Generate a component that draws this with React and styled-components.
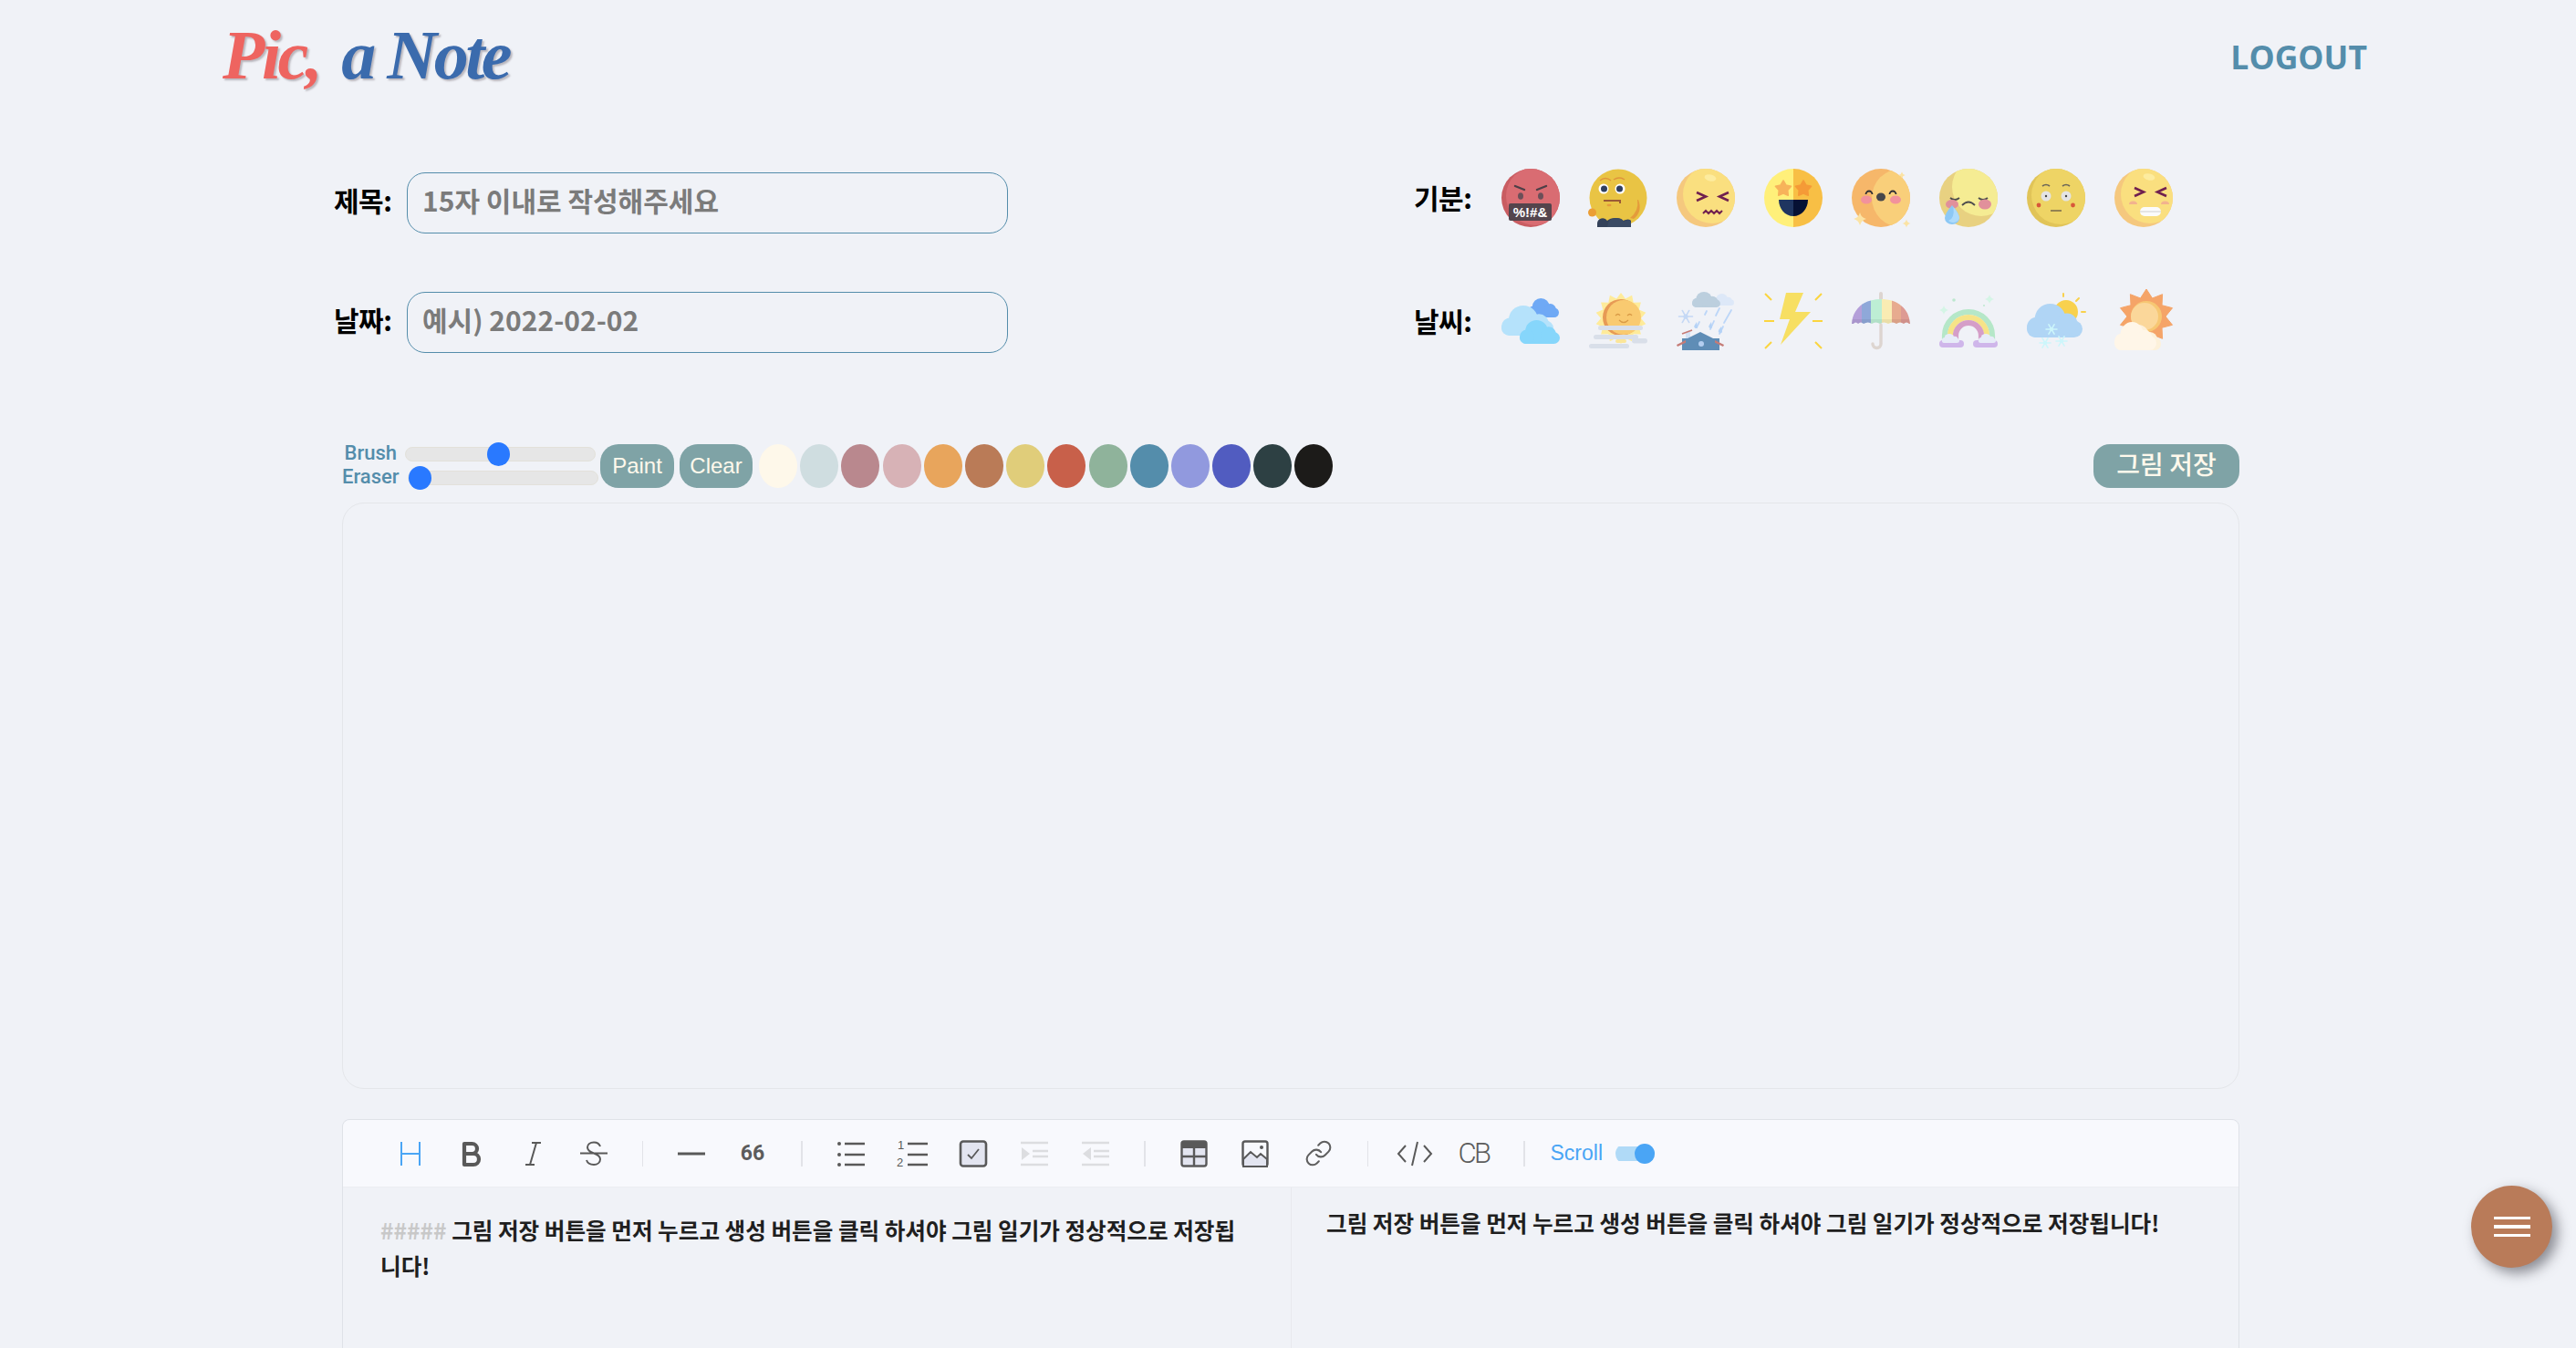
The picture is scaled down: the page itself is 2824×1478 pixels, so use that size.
import React from "react";
import styled, { createGlobalStyle } from "styled-components";
import { Link as LinkIcon } from "lucide-react";

const KR = `"Noto Sans CJK KR", "Noto Sans", sans-serif`;

const Global = createGlobalStyle`
  html, body { margin: 0; padding: 0; height: 1478px; overflow: hidden; background: #f0f2f7; }
  * { box-sizing: border-box; }
`;

const Page = styled.div`
  width: 2824px;
  height: 1478px;
  overflow: hidden;
  background: #f0f2f7;
  font-family: ${KR};
`;

const Header = styled.header`
  height: 128px;
  padding: 0 229px 0 244px;
  display: flex;
  align-items: center;
  justify-content: space-between;
`;

const Logo = styled.div`
  display: flex;
  gap: 24px;
  font-family: "Liberation Serif", serif;
  font-style: italic;
  font-weight: 700;
  font-size: 76px;
  line-height: 1;
  margin-top: -8px;
  letter-spacing: -3.5px;
  text-shadow: 2px 2px 2px rgba(120, 110, 120, 0.45);
`;

const LogoWord = styled.span`
  color: ${(p) => p.$color};
`;

const LogoutLink = styled.a`
  font-family: "Open Sans", sans-serif;
  font-weight: 700;
  font-size: 35.5px;
  line-height: 1;
  margin-top: -3px;
  color: #548dab;
`;

const TopSection = styled.section`
  margin-top: 57px;
  padding-left: 366px;
  display: flex;
`;

const FormColumn = styled.div`
  width: 1184px;
  padding-top: 4px;
  display: flex;
  flex-direction: column;
  gap: 64px;
`;

const FieldRow = styled.label`
  display: flex;
  align-items: center;
  gap: 17px;
`;

const FieldLabel = styled.span`
  width: 63px;
  font-size: 30px;
  font-weight: 700;
  line-height: 1;
  white-space: nowrap;
  color: #000;
  letter-spacing: -0.5px;
  margin-top: -8px;
`;

const TextInput = styled.input`
  width: 659px;
  height: 67px;
  padding: 0 16px 8px;
  border: 1.5px solid #548dab;
  border-radius: 20px;
  background: transparent;
  font-family: ${KR};
  font-size: 30px;
  font-weight: 700;
  outline: none;
  &::placeholder { color: #7b7b7b; opacity: 1; }
`;

const PickerColumn = styled.div`
  display: flex;
  flex-direction: column;
  gap: 71px;
`;

const PickerRow = styled.div`
  display: flex;
  align-items: center;
  height: 64px;
`;

const PickerLabel = styled(FieldLabel)`
  width: 96px;
  margin-top: -3px;
`;

const PickerIcons = styled.div`
  display: flex;
  gap: 32px;
`;

const Picture = styled.svg`
  width: 64px;
  height: 64px;
  display: block;
  overflow: visible;
`;

const DrawSection = styled.section`
  margin-top: 98px;
  padding: 0 369px 0 375px;
`;

const Tools = styled.div`
  height: 52px;
  display: flex;
  align-items: center;
`;

const SliderGroup = styled.div`
  width: 283px;
  display: flex;
  flex-direction: column;
`;

const SliderRow = styled.div`
  height: 26px;
  display: flex;
  align-items: center;
  gap: ${(p) => p.$gap}px;
`;

const SliderLabel = styled.span`
  width: ${(p) => p.$width}px;
  text-align: right;
  font-family: "Roboto", sans-serif;
  font-weight: 500;
  font-size: 22px;
  line-height: 1;
  margin-top: -3px;
  color: #548dab;
`;

const Range = styled.input`
  appearance: none;
  width: 209px;
  height: 26px;
  margin: 0;
  background: transparent;
  &::-webkit-slider-runnable-track {
    height: 16px;
    border-radius: 8px;
    background: #e6e6e6;
    border: 1px solid #e3e1da;
  }
  &::-webkit-slider-thumb {
    appearance: none;
    width: 25px;
    height: 26px;
    margin-top: -6px;
    border-radius: 50%;
    background: #2979ff;
  }
`;

const PaintButton = styled.button`
  width: ${(p) => p.$width}px;
  height: 48px;
  margin-right: 6px;
  padding: 0;
  border: none;
  border-radius: 20px;
  background: #7fa3a6;
  color: #fff9ec;
  font-family: "Liberation Sans", sans-serif;
  font-size: 24px;
`;

const Swatches = styled.div`
  margin-left: 1px;
  display: flex;
  gap: 3.2px;
`;

const Swatch = styled.span`
  display: block;
  width: 42px;
  height: 48px;
  border-radius: 50%;
  background: ${(p) => p.$color};
`;

const SaveButton = styled.button`
  margin-left: auto;
  width: 160px;
  height: 48px;
  padding: 0 0 6px;
  border: none;
  border-radius: 18px;
  background: #7fa3a6;
  color: #fff9ec;
  font-family: ${KR};
  font-size: 28px;
  font-weight: 500;
`;

const Canvas = styled.div`
  margin-top: 14px;
  height: 643px;
  border: 1.5px solid #e4e6ea;
  border-radius: 24px;
`;

const Editor = styled.div`
  margin-top: 33px;
  height: 400px;
  border: 1.5px solid #dfe2e8;
  border-radius: 8px 8px 0 0;
`;

const EditorBar = styled.div`
  height: 74px;
  padding-left: 40px;
  display: flex;
  align-items: center;
  background: #f8f9fd;
  border-bottom: 1.5px solid #ecedf2;
  border-radius: 8px 8px 0 0;
`;

const ToolButton = styled.span`
  flex: none;
  width: ${(p) => p.$width || 67}px;
  height: 32px;
  display: flex;
  align-items: center;
  justify-content: center;
`;

const ToolIcon = styled.svg`
  width: ${(p) => p.$w || 32}px;
  height: 32px;
  display: block;
  overflow: visible;
  fill: none;
  stroke: ${(p) => p.$stroke || "#595959"};
  stroke-width: 2.4;
`;

const Divider = styled.span`
  flex: none;
  width: 1.5px;
  height: 28px;
  margin: 0 ${(p) => p.$space}px;
  background: #e2e3e8;
`;

const GlyphTool = styled.span`
  font-family: "Roboto", sans-serif;
  font-size: ${(p) => p.$size}px;
  font-weight: ${(p) => p.$weight};
  letter-spacing: ${(p) => p.$spacing}px;
  color: #5c5c5c;
  line-height: 1;
`;

const ScrollLabel = styled.span`
  margin-left: 6px;
  font-family: "Liberation Sans", sans-serif;
  font-size: 23px;
  color: #4aa5f5;
`;

const ScrollSwitch = styled.span`
  margin-left: 14px;
  width: 43px;
  height: 22px;
  display: flex;
  align-items: center;
  justify-content: flex-end;
  background: linear-gradient(#0000 3px, #b0daf7 3px, #b0daf7 19px, #0000 19px);
  border-radius: 11px;
`;

const ScrollKnob = styled.span`
  width: 22px;
  height: 22px;
  border-radius: 50%;
  background: #4aa5f5;
`;

const Panes = styled.div`
  display: flex;
  height: 330px;
`;

const SourcePane = styled.div`
  width: 1040px;
  padding: 27px 40px 0 41px;
  border-right: 1.5px solid #e8e9ee;
  font-size: 24.6px;
  font-weight: 600;
  line-height: 38.5px;
  color: #1f1f1f;
  word-break: break-all;
`;

const HashMark = styled.span`
  color: #c8c8c8;
`;

const PreviewPane = styled.div`
  flex: 1;
  padding: 18.5px 0 0 38px;
  font-size: 24.6px;
  font-weight: 600;
  line-height: 39px;
  color: #1f1f1f;
  white-space: nowrap;
`;

const Fab = styled.button`
  position: fixed;
  left: 2709px;
  top: 1300px;
  width: 89px;
  height: 90px;
  padding: 0;
  border: none;
  border-radius: 50%;
  background: #b97b59;
  box-shadow: 6px 6px 14px rgba(40, 40, 50, 0.5);
  display: flex;
  flex-direction: column;
  align-items: center;
  justify-content: center;
  gap: 6px;
`;

const FabLine = styled.span`
  width: 40px;
  height: 3.5px;
  background: #fff;
`;

/* ---------- drawing helpers ---------- */

const Cloud = ({ x, y, w, h, fill }) => (
  <g transform={`translate(${x} ${y}) scale(${w / 100} ${h / 60})`} fill={fill}>
    <rect x="0" y="30" width="100" height="30" rx="15" />
    <circle cx="42" cy="28" r="28" />
    <circle cx="72" cy="36" r="19" />
    <circle cx="18" cy="42" r="18" />
  </g>
);

const spikes = (cx, cy, outer, inner, n) =>
  Array.from({ length: n * 2 }, (_, i) => {
    const r = i % 2 ? inner : outer;
    const a = (Math.PI * i) / n - Math.PI / 2;
    return `${(cx + r * Math.cos(a)).toFixed(1)},${(cy + r * Math.sin(a)).toFixed(1)}`;
  }).join(" ");

const Sparkle = ({ x, y, r, fill }) => (
  <path
    fill={fill}
    d={`M${x} ${y - r}Q${x + r * 0.2} ${y - r * 0.2} ${x + r} ${y}Q${x + r * 0.2} ${y + r * 0.2} ${x} ${y + r}Q${x - r * 0.2} ${y + r * 0.2} ${x - r} ${y}Q${x - r * 0.2} ${y - r * 0.2} ${x} ${y - r}z`}
  />
);

const Flake = ({ x, y, r, stroke }) => (
  <g stroke={stroke} strokeWidth="1.6" strokeLinecap="round">
    <path d={`M${x - r} ${y}H${x + r}M${x - r * 0.5} ${y - r * 0.87}L${x + r * 0.5} ${y + r * 0.87}M${x + r * 0.5} ${y - r * 0.87}L${x - r * 0.5} ${y + r * 0.87}`} />
    <circle cx={x} cy={y} r={r * 0.35} fill={stroke} stroke="none" />
  </g>
);

const Disc = ({ id, base, light, cx, cy, r = 32 }) => (
  <>
    <clipPath id={id}>
      <circle cx="32" cy="32" r="32" />
    </clipPath>
    <circle cx="32" cy="32" r="32" fill={base} />
    <circle cx={cx} cy={cy} r={r} fill={light} clipPath={`url(#${id})`} />
  </>
);

const Squint = () => (
  <g fill="none" stroke="#70204f" strokeWidth="2.6">
    <path d="M22 26l10 4.500-10 4.500M57 26l-10 4.500 10 4.500" />
  </g>
);

const moods = [
  <>
    <Disc id="m1" base="#c95d62" light="#d96c72" cx={37} cy={30} />
    <path d="M15 19l10 4M49 19l-10 4" stroke="#4d3f47" strokeWidth="2.400" strokeLinecap="round" />
    <ellipse cx="21" cy="30" rx="3" ry="3.800" fill="#6b4f58" />
    <ellipse cx="43" cy="30" rx="3" ry="3.800" fill="#6b4f58" />
    <rect x="8" y="38" width="47" height="19" rx="2" fill="#54444c" />
    <text x="31.500" y="53" textAnchor="middle" fontFamily="Liberation Sans" fontWeight="700" fontSize="15" fill="#fff">%!#&amp;</text>
  </>,
  <>
    <circle cx="32" cy="32" r="31.500" fill="#e9c444" />
    <path d="M12 13q6-5 12 0M27 12q6-4 12 0" fill="none" stroke="#e0943c" strokeWidth="1.500" />
    <circle cx="16" cy="22" r="5.500" fill="#fff" />
    <circle cx="34" cy="22" r="5.500" fill="#fff" />
    <circle cx="16.500" cy="22" r="3.500" fill="#2f3f5f" />
    <circle cx="33.500" cy="22" r="3.500" fill="#2f3f5f" />
    <path d="M16 35h18v3" fill="none" stroke="#9b5a35" strokeWidth="2" />
    <ellipse cx="22" cy="40" rx="2.500" ry="1.200" fill="#e49b3b" />
    <circle cx="3.500" cy="48" r="4.500" fill="#eb9e35" />
    <path d="M53 34q2 12-8 20l4 1q10-8 5-21z" fill="#e49b3b" />
    <path d="M9 64v-4a6 6 0 0 1 11-3q3-3 9-3t8 3q7-3 9 0v7z" fill="#34425a" />
    <path d="M20 64q1-10 9-10t9 4q7-4 8 0v6z" fill="#3a4a63" />
  </>,
  <>
    <Disc id="m3" base="#f5c87e" light="#fadf7f" cx={39} cy={28} />
    <ellipse cx="37" cy="10" rx="6.500" ry="3.500" fill="#fdec9f" transform="rotate(12 37 10)" />
    <Squint />
    <path d="M29 49l3-3 3 3 3-3 3 3 3-3 3 3 3-3" fill="none" stroke="#70204f" strokeWidth="2" />
  </>,
  <>
    <clipPath id="m4"><circle cx="32" cy="32" r="32" /></clipPath>
    <g clipPath="url(#m4)">
      <rect width="32" height="64" fill="#fff07a" />
      <rect x="32" width="32" height="64" fill="#f8bf45" />
    </g>
    <polygon points={spikes(21, 22, 9, 5, 5)} fill="#f7b35a" strokeLinejoin="round" stroke="#f7b35a" strokeWidth="1.500" />
    <polygon points={spikes(43, 22, 9, 5, 5)} fill="#f59a37" strokeLinejoin="round" stroke="#f59a37" strokeWidth="1.500" />
    <path d="M16 34h16v18c-9 0-16-8-16-18z" fill="#1f3560" />
    <path d="M32 34h16c0 10-7 18-16 18z" fill="#061134" />
  </>,
  <>
    <Disc id="m5" base="#f6b76a" light="#f9cf7a" cx={54} cy={32} />
    <path d="M15.500 28a3.500 3.500 0 0 1 7 0M41.500 28a3.500 3.500 0 0 1 7 0" fill="none" stroke="#2e2e33" strokeWidth="1.800" />
    <ellipse cx="32" cy="31" rx="5" ry="4.500" fill="#47474b" />
    <ellipse cx="16" cy="34" rx="6" ry="4.500" fill="#f2929c" />
    <ellipse cx="48" cy="34" rx="6" ry="4.500" fill="#f2929c" />
    <Sparkle x={9} y={55} r={7} fill="#fbe3a4" />
    <Sparkle x={60} y={60} r={4.500} fill="#fbe3a4" />
    <Sparkle x={55} y={7} r={3.500} fill="#fbe3a4" />
  </>,
  <>
    <Disc id="m6" base="#e8d181" light="#f5ec93" cx={46} cy={20} />
    <path d="M12 32q5 4 10 0M43 32q5 4 10 0" fill="none" stroke="#4d4d4d" strokeWidth="1.800" />
    <path d="M25 40q7-7 14 0" fill="none" stroke="#4d4d4d" strokeWidth="1.800" />
    <ellipse cx="14" cy="39" rx="7" ry="5" fill="#e1909b" />
    <ellipse cx="50" cy="39" rx="7" ry="5.500" fill="#e1909b" />
    <path d="M14 40q8 9 8 14a8 7 0 0 1-16 0q0-5 8-14z" fill="#8cc8f5" />
    <path d="M15.500 42q6.500 8 6.500 12a7 6 0 0 1-12 3q7-2 5.500-15z" fill="#aedbfb" />
  </>,
  <>
    <Disc id="m7" base="#e1c458" light="#eed465" cx={37} cy={29} />
    <path d="M17 19q4-3 8 0M39 19q4-3 8 0" fill="none" stroke="#6b6658" strokeWidth="1.700" />
    <circle cx="21" cy="30" r="5.500" fill="#e4e4e4" />
    <circle cx="43" cy="30" r="5.500" fill="#e4e4e4" />
    <circle cx="21" cy="30" r="1.200" fill="#444" />
    <circle cx="43" cy="30" r="1.200" fill="#444" />
    <circle cx="13" cy="40" r="2.400" fill="#d8573a" />
    <circle cx="50.500" cy="40" r="2.400" fill="#d8573a" />
    <path d="M26 46h12" stroke="#8a7a50" strokeWidth="1.800" />
  </>,
  <>
    <Disc id="m8" base="#f5c87e" light="#fadf7f" cx={39} cy={28} />
    <ellipse cx="38" cy="9" rx="6.500" ry="3.500" fill="#fdec9f" transform="rotate(12 38 9)" />
    <g transform="translate(0 -5)"><Squint /></g>
    <path d="M16 39a4.500 3.500 0 0 1 9 0zM51 39a4.500 3.500 0 0 1 9 0z" fill="#f2b38e" />
    <rect x="28" y="42" width="23" height="10" rx="5" fill="#fbfbfb" />
    <path d="M28 47h23" stroke="#dedede" strokeWidth="1.500" />
  </>,
];

const weather = [
  <>
    <Cloud x={29} y={7} w={34} h={21} fill="#6fa9f5" />
    <Cloud x={0} y={15} w={57} h={33} fill="#b5e2fb" />
    <Cloud x={20} y={31} w={44} h={26} fill="#86d6fb" />
  </>,
  <>
    <polygon points={spikes(35, 29, 28, 22, 14)} fill="#feeb9a" />
    <circle cx="35" cy="28" r="20" fill="#e79a55" />
    <circle cx="38" cy="28" r="19" fill="#f9ca70" />
    <path d="M29 26q3-3 5 0M42 26q3-3 5 0M33 31q5 5 10 0" fill="none" stroke="#d99a45" strokeWidth="1.300" />
    <g fill="#d9dfe9">
      <rect x="10" y="37" width="49" height="5" rx="2.500" />
      <rect x="5" y="47" width="49" height="5" rx="2.500" />
      <rect x="47" y="51" width="17" height="5.500" rx="2.700" />
      <rect x="0" y="57" width="44" height="5" rx="2.500" />
    </g>
    <rect x="29" y="52" width="12" height="4" rx="2" fill="#fbe69a" />
  </>,
  <>
    <Cloud x={40} y={2} w={23} h={13} fill="#dde8f8" />
    <Cloud x={17} y={0} w={31} h={17} fill="#bccfde" />
    <Flake x={10} y={27} r={7.500} stroke="#c4d8f5" />
    <g fill="none" stroke="#bcd6f8" strokeWidth="1.800" strokeLinecap="round">
      <path d="M33 21l-2 4M47 18l-4 8M60 20l-8 14M25 33l-3 6M41 32l-4 9M51 38l-4 8" />
    </g>
    <path d="M22 33l-2.500 4a2 2 0 0 0 3.500 2z" fill="#b4d2f6" />
    <path d="M38 33l-2.500 4a2 2 0 0 0 3.500 2z" fill="#b4d2f6" />
    <path d="M49 38l-3 4a2.200 2.200 0 0 0 4 2z" fill="#b4d2f6" />
    <rect x="10" y="44" width="5" height="8" fill="#d3e2f5" />
    <path d="M6 46l11-4" stroke="#c57b76" strokeWidth="1.800" />
    <rect x="6" y="51" width="41" height="13" fill="#5f8db6" />
    <path d="M0 58l26-13 26 13-1 2-25-12L1 60z" fill="#c57b76" />
    <path d="M10 52l16-8 16 8v12H10z" fill="#5f8db6" />
    <circle cx="27" cy="57" r="3" fill="#b4cef0" />
  </>,
  <>
    <polygon points="24,1 43,1 34,22 51,22 18,58 28,30 17,30" fill="#f7df62" />
    <path d="M1 2l7 7M63 2l-7 7M0 32h11M53 32h11M1 62l7-7M63 62l-7-7" stroke="#fbd53f" strokeWidth="2" fill="none" />
  </>,
  <>
    <rect x="30" y="0" width="4" height="10" rx="2" fill="#ddd5d0" />
    <path d="M32 36v21a4.500 4.500 0 0 1-9 0" fill="none" stroke="#ddd5d0" strokeWidth="3.400" strokeLinecap="round" />
    <clipPath id="u1"><path d="M0 35C1 18 14 8 32 8s31 10 32 27l-1 0q-3-3-6 0-4-3-8 0-4-3-9 0-5-3-9 0-5-3-9 0-4-3-9 0-3-3-6 0-3-3-5 0z" /></clipPath>
    <g clipPath="url(#u1)">
      <rect x="0" y="0" width="12" height="40" fill="#b49fd9" />
      <rect x="11" y="0" width="10" height="40" fill="#8fa8d9" />
      <rect x="21" y="0" width="12" height="40" fill="#bdeed4" />
      <rect x="33" y="0" width="11" height="40" fill="#f9ecb3" />
      <rect x="44" y="0" width="10" height="40" fill="#e7ab8f" />
      <rect x="54" y="0" width="10" height="40" fill="#dd9a93" />
      <rect x="0" y="30" width="64" height="6" fill="#000" opacity="0.06" />
    </g>
  </>,
  <>
    <g fill="none" strokeWidth="6.200">
      <path d="M6 56V48a26 26 0 0 1 52 0v8" stroke="#b5e7c8" />
      <path d="M12 56V48a20 20 0 0 1 40 0v8" stroke="#f6e387" />
      <path d="M18 56V48a14 14 0 0 1 28 0v8" stroke="#d59ec8" />
    </g>
    <rect x="0" y="53" width="27" height="8" rx="4" fill="#cfb6ea" />
    <rect x="37" y="53" width="27" height="8" rx="4" fill="#cfb6ea" />
    <Cloud x={3} y={46} w={19} h={10} fill="#e7ecf8" />
    <Cloud x={43} y={46} w={19} h={10} fill="#e7ecf8" />
    <Sparkle x={5} y={20} r={5} fill="#d5f5e6" />
    <Sparkle x={55} y={8} r={5} fill="#d5f5e6" />
    <circle cx="16" cy="9" r="1.800" fill="#bce8cf" />
    <circle cx="49" cy="15" r="1" fill="#bce8cf" />
  </>,
  <>
    <circle cx="43" cy="22" r="13" fill="#f8d14d" />
    <path d="M40 2v3M57 7l-3 3M60 22h4" stroke="#f8d14d" strokeWidth="2" strokeLinecap="round" />
    <Cloud x={0} y={13} w={61} h={37} fill="#b0d5f5" />
    <Flake x={27} y={41} r={6} stroke="#cdf6fb" />
    <Flake x={20} y={56} r={6} stroke="#cdf6fb" />
    <Flake x={38} y={54} r={6} stroke="#cdf6fb" />
  </>,
  <>
    <polygon points={spikes(35, 27, 30, 21, 10)} fill="#f5a468" stroke="#f5a468" strokeLinejoin="round" />
    <circle cx="35" cy="27" r="17" fill="#f7c773" />
    <circle cx="33" cy="27" r="15" fill="#fbd79a" />
    <Cloud x={8} y={36} w={43} h={28} fill="#fdf1da" />
    <Cloud x={0} y={33} w={46} h={31} fill="#fff6e8" />
  </>,
];

const swatchColors = [
  "#fef8ea", "#cfdde0", "#b9888e", "#d7b2b6", "#e8a55c", "#ba7b57", "#e0cd7a",
  "#c8604a", "#8fb39b", "#548dab", "#9199de", "#515cc0", "#2d4043", "#1c1b19",
];

const hint = "그림 저장 버튼을 먼저 누르고 생성 버튼을 클릭 하셔야 그림 일기가 정상적으로 저장됩니다!";

export default function App() {
  return (
    <Page>
      <Global />
      <Header>
        <Logo>
          <LogoWord $color="#ee6460">Pic,</LogoWord>
          <LogoWord $color="#3b6bad">a Note</LogoWord>
        </Logo>
        <LogoutLink>LOGOUT</LogoutLink>
      </Header>

      <TopSection>
        <FormColumn>
          <FieldRow>
            <FieldLabel>제목:</FieldLabel>
            <TextInput placeholder="15자 이내로 작성해주세요" />
          </FieldRow>
          <FieldRow>
            <FieldLabel>날짜:</FieldLabel>
            <TextInput placeholder="예시) 2022-02-02" />
          </FieldRow>
        </FormColumn>
        <PickerColumn>
          <PickerRow>
            <PickerLabel>기분:</PickerLabel>
            <PickerIcons>
              {moods.map((m, i) => (
                <Picture key={i} viewBox="0 0 64 64">{m}</Picture>
              ))}
            </PickerIcons>
          </PickerRow>
          <PickerRow>
            <PickerLabel>날씨:</PickerLabel>
            <PickerIcons>
              {weather.map((m, i) => (
                <Picture key={i} viewBox="0 0 64 64">{m}</Picture>
              ))}
            </PickerIcons>
          </PickerRow>
        </PickerColumn>
      </TopSection>

      <DrawSection>
        <Tools>
          <SliderGroup>
            <SliderRow $gap={9}>
              <SliderLabel $width={60}>Brush</SliderLabel>
              <Range type="range" min="0" max="100" defaultValue="49" />
            </SliderRow>
            <SliderRow $gap={10}>
              <SliderLabel $width={62}>Eraser</SliderLabel>
              <Range type="range" min="0" max="100" defaultValue="0" />
            </SliderRow>
          </SliderGroup>
          <PaintButton $width={81}>Paint</PaintButton>
          <PaintButton $width={80}>Clear</PaintButton>
          <Swatches>
            {swatchColors.map((c) => (
              <Swatch key={c} $color={c} />
            ))}
          </Swatches>
          <SaveButton>그림 저장</SaveButton>
        </Tools>
        <Canvas />

        <Editor>
          <EditorBar>
            <ToolButton>
              <ToolIcon viewBox="0 0 32 32" $stroke="#4aa5f5"><path d="M6 3v26M26 3v26M6 16h20" strokeWidth="2" /></ToolIcon>
            </ToolButton>
            <ToolButton>
              <ToolIcon viewBox="0 0 32 32"><path d="M8 5h8.500a5.500 5.500 0 0 1 0 11H8zM8 16h10a6 6 0 0 1 0 12H8z" strokeWidth="4.200" strokeLinejoin="round" /></ToolIcon>
            </ToolButton>
            <ToolButton>
              <ToolIcon viewBox="0 0 32 32"><path d="M15 4h10M8 28h10M20 4l-7 24" strokeWidth="2" /></ToolIcon>
            </ToolButton>
            <ToolButton>
              <ToolIcon viewBox="0 0 32 32"><path d="M1 15.500h30M23 8c-1-3-4-4.500-7-4.500-4 0-7 2-7 5.500s3 5 7 6.500 7 3 7 6.500-3 6-7 6-7-2-8-5" strokeWidth="2" /></ToolIcon>
            </ToolButton>
            <Divider $space={19.5} />
            <ToolButton>
              <ToolIcon viewBox="0 0 32 32"><path d="M1 16h30" strokeWidth="3" /></ToolIcon>
            </ToolButton>
            <ToolButton>
              <GlyphTool $size={23} $weight={700} $spacing={0}>66</GlyphTool>
            </ToolButton>
            <Divider $space={19.5} />
            <ToolButton>
              <ToolIcon viewBox="0 0 32 32">
                <path d="M9 5h22M9 17h22M9 28h22" strokeWidth="2.600" />
                <circle cx="3" cy="5" r="2" fill="#595959" stroke="none" />
                <circle cx="3" cy="17" r="2" fill="#595959" stroke="none" />
                <circle cx="3" cy="28" r="2" fill="#595959" stroke="none" />
              </ToolIcon>
            </ToolButton>
            <ToolButton>
              <ToolIcon viewBox="0 0 36 32" $w={36}>
                <path d="M13 5h22M13 17h22M13 28h22" strokeWidth="2.600" />
                <text x="2" y="11" fontFamily="Liberation Sans" fontSize="13" fill="#595959" stroke="none">1</text>
                <text x="1" y="29.500" fontFamily="Liberation Sans" fontSize="13" fill="#595959" stroke="none">2</text>
              </ToolIcon>
            </ToolButton>
            <ToolButton>
              <ToolIcon viewBox="0 0 32 32">
                <rect x="2" y="2.500" width="28" height="27" rx="3" fill="#e3e5f0" strokeWidth="2.600" />
                <path d="M10 17l4 4 8-10" strokeWidth="1.800" />
              </ToolIcon>
            </ToolButton>
            <ToolButton>
              <ToolIcon viewBox="0 0 32 32" $stroke="#dcdde0">
                <path d="M1 4h30M1 28h30M14 13h17M14 19h17" strokeWidth="2.600" />
                <path d="M2 9v14l9-7z" fill="#dcdde0" stroke="none" />
              </ToolIcon>
            </ToolButton>
            <ToolButton>
              <ToolIcon viewBox="0 0 32 32" $stroke="#dcdde0">
                <path d="M1 4h30M1 28h30M14 13h17M14 19h17" strokeWidth="2.600" />
                <path d="M11 9v14l-9-7z" fill="#dcdde0" stroke="none" />
              </ToolIcon>
            </ToolButton>
            <Divider $space={20} />
            <ToolButton>
              <ToolIcon viewBox="0 0 32 32">
                <rect x="2.500" y="2.500" width="27" height="27" rx="2.500" fill="#e3e5f0" strokeWidth="2.400" />
                <path d="M2 6.500h28" strokeWidth="7" />
                <path d="M16 9v20M3 19h26" strokeWidth="2.400" />
              </ToolIcon>
            </ToolButton>
            <ToolButton>
              <ToolIcon viewBox="0 0 32 32">
                <rect x="2.500" y="2.500" width="27" height="27" rx="2.500" strokeWidth="2.400" />
                <path d="M3 22l8-8 7 6 4-4 7 6v8H3z" fill="#e3e5f0" strokeWidth="2" />
                <circle cx="23" cy="9" r="2" fill="#595959" stroke="none" />
              </ToolIcon>
            </ToolButton>
            <ToolButton $width={71}>
              <LinkIcon size={31} color="#5f5f5f" strokeWidth={1.6} />
            </ToolButton>
            <Divider $space={18} />
            <ToolButton $width={65}>
              <ToolIcon viewBox="0 0 40 32" $w={40}>
                <path d="M10 7l-8 9 8 9M30 7l8 9-8 9M23 3l-6 26" strokeWidth="2" />
              </ToolIcon>
            </ToolButton>
            <ToolButton $width={65}>
              <GlyphTool $size={31} $weight={300} $spacing={-2.5}>CB</GlyphTool>
            </ToolButton>
            <Divider $space={22} />
            <ScrollLabel>Scroll</ScrollLabel>
            <ScrollSwitch><ScrollKnob /></ScrollSwitch>
          </EditorBar>
          <Panes>
            <SourcePane><HashMark>#####</HashMark> {hint}</SourcePane>
            <PreviewPane>{hint}</PreviewPane>
          </Panes>
        </Editor>
      </DrawSection>

      <Fab aria-label="menu">
        <FabLine />
        <FabLine />
        <FabLine />
      </Fab>
    </Page>
  );
}
